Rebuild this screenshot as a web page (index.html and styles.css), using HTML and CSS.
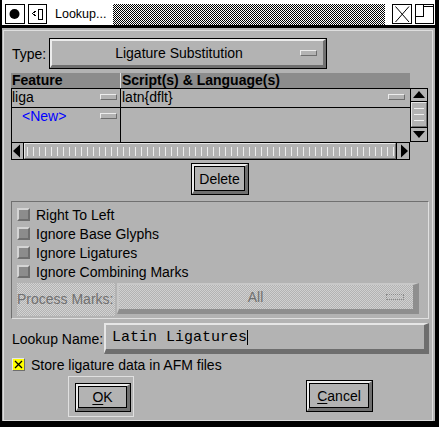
FILE: index.html
```html
<!DOCTYPE html>
<html>
<head>
<meta charset="utf-8">
<title>Lookup...</title>
<link rel="stylesheet" href="styles.css">
</head>
<body>
<div class="win">
  <div class="titlebar">
    <div class="tbb b1"><svg width="18" height="18" viewBox="0 0 18 18"><circle cx="8.5" cy="9" r="5" fill="#000"/></svg></div>
    <div class="tbb b2"><svg width="17" height="18" viewBox="0 0 17 18" shape-rendering="crispEdges"><path d="M7 6 L3.5 8.5 L7 11" fill="none" stroke="#000" stroke-width="1"/><rect x="9.5" y="4.5" width="4" height="10" fill="none" stroke="#000" stroke-width="1"/></svg></div>
    <div class="title">Lookup...</div>
    <div class="stip"></div>
    <div class="tbb close"><svg width="18" height="18" viewBox="0 0 18 18"><path d="M2.5 1.5 L16 17 M16 1.5 L2.5 17" stroke="#000" stroke-width="1" fill="none"/></svg></div>
    <div class="tbb max"><svg width="17" height="18" viewBox="0 0 17 18" shape-rendering="crispEdges"><path d="M7.5 0 V11.5 H0 M7.5 1.5 H17" stroke="#000" stroke-width="1" fill="none"/></svg></div>
  </div>
  <div class="body">
    <div class="frame">
      <div class="typerow">
        <div class="lbl">Type:</div>
        <div class="dd"><div class="dd-in"><span class="ddt">Ligature Substitution</span><span class="mark"></span></div></div>
      </div>

      <div class="tbl">
        <div class="tmain">
          <div class="thead"><div class="hc1">Feature</div><div class="hc2">Script(s) &amp; Language(s)</div></div>
          <div class="trow r1">
            <div class="c1"><span class="cell">liga</span><span class="mark m1"></span></div>
            <div class="c2"><span class="cell">latn{dflt}</span><span class="mark m2"></span></div>
          </div>
          <div class="trow r2">
            <div class="c1"><span class="cell new">&lt;New&gt;</span><span class="mark m1"></span></div>
            <div class="c2"></div>
          </div>
          <div class="hscroll">
            <div class="harr left"><svg width="11" height="16" viewBox="0 0 11 16"><polygon points="1,8 8,1.5 8,14.5" fill="#000"/></svg></div>
            <div class="hthumb"></div>
            <div class="harr right"><svg width="12" height="16" viewBox="0 0 12 16"><polygon points="11,8 4,1.5 4,14.5" fill="#000"/></svg></div>
          </div>
        </div>
        <div class="vscroll">
          <div class="varr up"><svg width="16" height="12" viewBox="0 0 16 12"><polygon points="8,2 2,9 14,9" fill="#000"/></svg></div>
          <div class="vthumb"><i></i><i></i><i></i></div>
          <div class="varr down"><svg width="16" height="13" viewBox="0 0 16 13"><polygon points="8,10 2,3 14,3" fill="#000"/></svg></div>
        </div>
      </div>

      <div class="delrow"><div class="btn del"><div class="btn-in">Delete</div></div></div>

      <div class="group">
        <div class="chk"><span class="box"></span>Right To Left</div>
        <div class="chk"><span class="box"></span>Ignore Base Glyphs</div>
        <div class="chk"><span class="box"></span>Ignore Ligatures</div>
        <div class="chk"><span class="box"></span>Ignore Combining Marks</div>
        <div class="pmrow">
          <div class="pmlbl">Process Marks:</div>
          <div class="pmdd"><span class="pmt">All</span><span class="pmmark"></span></div>
        </div>
      </div>

      <div class="namerow">
        <div class="lbl2">Lookup Name:</div>
        <div class="field"><span class="ftext">Latin Ligatures</span><span class="caret"></span></div>
      </div>

      <div class="store"><span class="ybox"><svg width="9" height="9" viewBox="0 0 9 9"><path d="M1 1 L8 8 M8 1 L1 8" stroke="#000" stroke-width="1.3" fill="none"/></svg></span>Store ligature data in AFM files</div>

      <div class="btnrow">
        <div class="deflt"><div class="btn ok"><div class="btn-in"><u>O</u>K</div></div></div>
        <div class="btn cancel"><div class="btn-in"><u>C</u>ancel</div></div>
      </div>
    </div>
  </div>
</div>
</body>
</html>
```

FILE: styles.css
```css
* { box-sizing: border-box; margin: 0; padding: 0; }
html, body { width: 439px; height: 427px; overflow: hidden; background: #000; }
body { font-family: "Liberation Sans", Arial, sans-serif; font-size: 14px; color: #000; }

.win { width: 439px; height: 427px; background: #000; padding: 0 4px 6px 2px; display: flex; flex-direction: column; }

/* title bar */
.titlebar { height: 25px; background: #fff; display: flex; align-items: flex-start; padding: 4px 1px 0 3px; flex: none; }
.tbb { height: 20px; border: 1px solid #000; background: #fff; flex: none; display: flex; align-items: center; justify-content: center; }
.b1 { width: 20px; }
.b2 { width: 19px; margin-left: 3px; }
.title { width: 58px; margin-left: 8px; font-size: 12.5px; line-height: 20px; flex: none; }
.stip { flex: 1; height: 21px; background: repeating-conic-gradient(#000 0 25%, #fff 0 50%) 0 0 / 2px 2px; }
.close { width: 20px; margin-left: 7px; }
.max { width: 19px; margin-left: 3px; }

/* body */
.body { flex: 1; margin-top: 3px; background: #b3b3b3; padding: 2px 2px 0 1px; display: flex; }
.frame { flex: 1; border: 1px solid #dedede; padding: 7px 3px 0 7px; display: flex; flex-direction: column; }

/* type row */
.typerow { display: flex; height: 31px; align-items: center; }
.lbl { width: 38px; padding-left: 1px; }
.dd { width: 278px; height: 31px; border: 1px solid #000; }
.dd-in { height: 100%; border-style: solid; border-width: 2px 3px 3px 2px; border-color: #ececec #707070 #707070 #ececec; display: flex; align-items: center; }
.ddt { flex: 1; text-align: center; padding-left: 6px; }
.mark { width: 17px; height: 6px; border: 1px solid; border-color: #ececec #6e6e6e #6e6e6e #ececec; background: #b3b3b3; flex: none; }
.dd-in .mark { margin-right: 6px; }

/* table */
.tbl { display: flex; margin-top: 4px; width: 417px; }
.tmain { width: 399px; }
.thead { height: 16px; background: #8c8c8c; border-bottom: 1px solid #000; display: flex; font-weight: bold; line-height: 15px; }
.hc1 { width: 110px; padding-left: 1px; border-right: 1px solid #e0e0e0; }
.hc2 { flex: 1; padding-left: 1px; }
.trow { display: flex; border-left: 1px solid #000; }
.r1 { height: 19px; border-bottom: 1px solid #000; }
.r2 { height: 34px; }
.c1 { width: 109px; border-right: 1px solid #000; display: flex; align-items: flex-start; }
.c2 { flex: 1; display: flex; align-items: flex-start; padding-left: 1px; }
.cell { flex: 1; line-height: 17px; }
.new { color: #0000ff; padding-left: 10px; }
.m1 { margin: 5px 3px 0 0; }
.m2 { margin: 5px 5px 0 0; }

.hscroll { height: 18px; border: 1px solid #000; display: flex; }
.harr { display: flex; align-items: center; justify-content: center; background: #b3b3b3; }
.harr.left { width: 12px; border-right: 1px solid #000; }
.harr.right { width: 13px; border-left: 1px solid #000; }
.hthumb { flex: 1; border-style: solid; border-width: 1px; border-color: #e6e6e6 #6e6e6e #6e6e6e #e6e6e6;
  background: repeating-linear-gradient(to right, transparent 0 2px, #ececec 2px 3px, transparent 3px 6px) 0 3px / 100% 9px no-repeat, #b3b3b3; }

.vscroll { width: 18px; height: 54px; margin-top: 15px; border: 1px solid #000; display: flex; flex-direction: column; }
.varr { display: flex; align-items: center; justify-content: center; }
.varr.up { height: 13px; border-bottom: 1px solid #000; }
.varr.down { height: 14px; border-top: 1px solid #000; }
.vthumb { flex: 1; border-style: solid; border-width: 1px; border-color: #e6e6e6 #6e6e6e #6e6e6e #e6e6e6; display: flex; flex-direction: column; justify-content: center; gap: 5px; align-items: center; }
.vthumb i { display: block; width: 10px; height: 1px; background: #f0f0f0; }

/* buttons */
.delrow { display: flex; justify-content: center; margin-top: 3px; }
.btn { border: 1px solid #000; display: flex; }
.btn-in { flex: 1; border-style: solid; border-width: 2px 3px 3px 2px; border-color: #ececec #707070 #707070 #ececec; display: flex; align-items: center; justify-content: center; box-shadow: inset 0 0 0 1px #000; }
.del { width: 58px; height: 32px; }
.btn u { text-decoration: underline; text-underline-offset: 2px; }

/* group */
.group { margin-top: 6px; height: 118px; border: 1px solid; border-color: #707070 #e0e0e0 #e0e0e0 #707070; padding: 3px 0 2px 5px; display: flex; flex-direction: column; }
.chk { height: 19px; display: flex; align-items: center; }
.box { width: 13px; height: 13px; margin-right: 6px; border-style: solid; border-width: 2px; border-color: #d4d4d4 #6e6e6e #6e6e6e #d4d4d4; background: #8c8c8c; flex: none; }
.pmrow { display: flex; margin-top: 2px; height: 33px; }
.pmlbl { width: 98px; height: 33px; color: #707070; line-height: 33px; background: repeating-conic-gradient(#b3b3b3 0 25%, #d2d2d2 0 50%) 0 0 / 2px 2px; }
.pmdd { width: 302px; height: 31px; margin-left: 2px; display: flex; align-items: center; border-style: solid; border-width: 2px 6px 5px 2px; border-color: #c8c8c8 #8e8e8e #8e8e8e #c8c8c8;
  background: repeating-conic-gradient(#b3b3b3 0 25%, #d0d0d0 0 50%) 0 0 / 2px 2px; color: #707070; }
.pmt { flex: 1; text-align: center; padding-left: 6px; }
.pmmark { width: 18px; height: 6px; border: 1px dotted #8a8a8a; margin-right: 9px; }

/* name */
.namerow { display: flex; margin-top: 4px; height: 31px; align-items: center; }
.lbl2 { width: 93px; padding-left: 1px; }
.field { width: 325px; height: 31px; border-style: solid; border-width: 2px 5px 5px 2px; border-color: #e6e6e6 #6e6e6e #6e6e6e #e6e6e6; display: flex; align-items: center; padding-left: 6px; }
.ftext { font-family: "Liberation Mono", "Courier New", monospace; font-size: 15px; }
.caret { width: 1px; height: 15px; background: #000; }

.store { display: flex; align-items: center; height: 15px; margin-top: 3px; padding-left: 1px; }
.ybox { width: 13px; height: 13px; margin-right: 6px; background: #ffff00; border-style: solid; border-width: 1px; border-color: #e6e6e6 #6e6e6e #6e6e6e #e6e6e6; display: flex; align-items: center; justify-content: center; flex: none; }

.btnrow { display: flex; margin-top: 4px; align-items: flex-start; }
.deflt { margin-left: 57px; width: 66px; height: 41px; border: 1px solid #e0e0e0; padding: 6px 2px 4px 6px; display: flex; }
.ok { flex: 1; }
.cancel { width: 67px; height: 32px; margin-left: 172px; margin-top: 4px; }
```
